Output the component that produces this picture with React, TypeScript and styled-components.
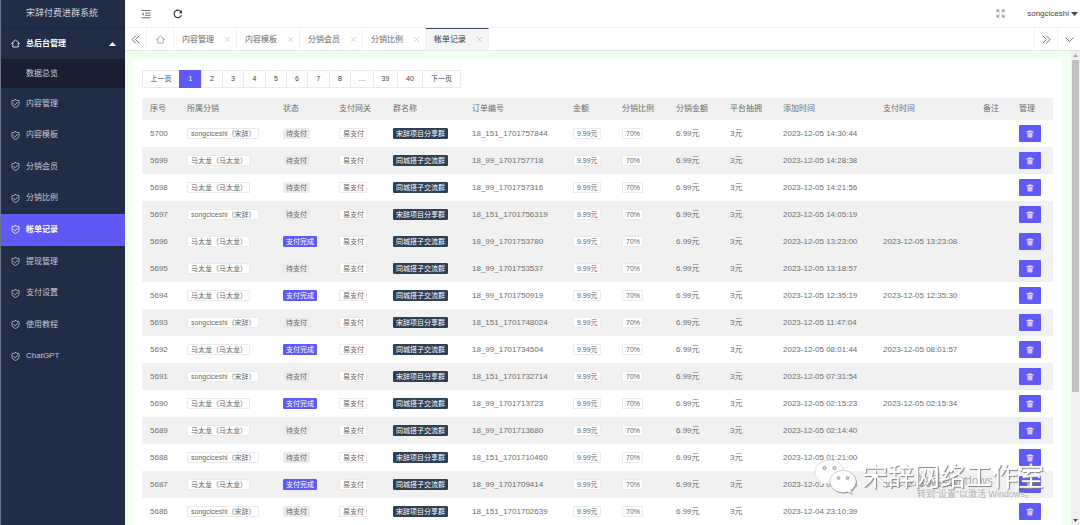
import React from 'react';
import styled, { createGlobalStyle, css } from 'styled-components';

const GlobalStyle = createGlobalStyle`
  *, *::before, *::after { box-sizing: border-box; }
  html, body, #root { height: 100%; }
  body {
    margin: 0;
    overflow: hidden;
    font-family: "Liberation Sans", "Noto Sans CJK SC", sans-serif;
    font-size: 8px;
    line-height: 12px;
    color: #6e6e6e;
    background: #f0fff0;
  }
  button { font: inherit; color: inherit; border: 0; padding: 0; background: none; cursor: pointer; }
  a { color: inherit; text-decoration: none; }
  ul { list-style: none; margin: 0; padding: 0; }
  svg { display: block; flex: none; }
`;

const Shell = styled.div`
  display: grid;
  grid-template-columns: 125px minmax(0, 1fr);
  grid-template-rows: minmax(0, 1fr);
  height: 100vh;
  overflow: hidden;
`;

/* Side navigation */

const Sidebar = styled.aside`
  display: flex;
  flex-direction: column;
  color: #c8cbd3;
  background: #212c47;
  border-left: 1px solid #6f7686;
`;

const Brand = styled.h1`
  margin: 0;
  height: 28px;
  padding-right: 2px;
  font-size: 9px;
  font-weight: 400;
  line-height: 27px;
  text-align: center;
  color: #d3d6dd;
  border-bottom: 1px solid #1d263c;
`;

const GroupButton = styled.button`
  display: flex;
  align-items: center;
  gap: 6px;
  width: 100%;
  height: 31px;
  padding: 0 9px 0 10px;
  font-weight: 700;
  color: #fff;
  text-align: left;
  span { flex: 1; }
`;

const SubItem = styled.a`
  display: block;
  height: 29px;
  padding-left: 25px;
  line-height: 29px;
  color: #d0d3da;
  background: #171f31;
`;

const Menu = styled.ul`
  display: grid;
  grid-template-rows: repeat(9, minmax(0, 1fr));
  height: 284px;
`;

const MenuLink = styled.a<{ $active?: boolean }>`
  display: flex;
  align-items: center;
  gap: 6px;
  height: 100%;
  padding-left: 10px;
  ${({ $active }) => $active && css`
    color: #fff;
    font-weight: 700;
    background: #5f59f6;
  `}
`;

/* Header */

const Main = styled.main`
  display: grid;
  grid-template-rows: 28px 23px minmax(0, 1fr);
  min-width: 0;
  min-height: 0;
`;

const TopBar = styled.header`
  display: flex;
  align-items: center;
  justify-content: space-between;
  padding: 0 2px 0 16px;
  background: #fff;
  border-bottom: 1px solid #f3f3f3;
`;

const ToolGroup = styled.div`
  display: flex;
  align-items: center;
  gap: 22px;
`;

const IconButton = styled.button`
  display: grid;
  place-items: center;
`;

const UserButton = styled.button`
  display: flex;
  align-items: center;
  gap: 2px;
  color: #444;
`;

const TabBar = styled.nav`
  display: flex;
  background: #fff;
  border-bottom: 1px solid #dfeadf;
  color: #666;
`;

const TabTool = styled.button<{ $left?: boolean }>`
  display: grid;
  place-items: center;
  width: ${({ $left }) => ($left ? 23 : 22)}px;
  color: #666;
  border-${({ $left }) => ($left ? 'left' : 'right')}: 1px solid #f3f3f3;
`;

const HomeTab = styled(TabTool)`
  width: 27px;
  color: #999;
`;

const Tab = styled.div<{ $active?: boolean }>`
  display: flex;
  align-items: center;
  justify-content: space-between;
  width: 63px;
  padding: 0 6px 0 8px;
  border-right: 1px solid #f3f3f3;
  border-top: 1px solid transparent;
  ${({ $active }) => $active && css`
    color: #333;
    background: #f5f5f5;
    border-top-color: #3b4567;
  `}
`;

const TabSpace = styled.div`
  flex: 1;
`;

/* Content */

const Viewport = styled.div`
  display: grid;
  grid-template-columns: minmax(0, 1fr) 9px;
  grid-template-rows: minmax(0, 1fr);
  min-height: 0;
`;

const Page = styled.div`
  padding: 8px 9px 0 8px;
  overflow: hidden;
`;

const Card = styled.section`
  padding: 11px 9px 20px;
  background: #fff;
`;

const Pagination = styled.nav`
  display: flex;
  width: max-content;
  border: 1px solid #ebebeb;
  border-radius: 1px;
  background: #fff;
`;

const PageButton = styled.button<{ $active?: boolean; $width: number }>`
  width: ${({ $width }) => $width}px;
  height: 16px;
  font-size: 7px;
  line-height: 16px;
  color: #444;
  & + & { border-left: 1px solid #ebebeb; }
  ${({ $active }) => $active && css`
    &&& {
      height: 18px;
      margin: -1px 0;
      color: #fff;
      background: #5f59f6;
      border-color: #5f59f6;
    }
  `}
`;

const Table = styled.table`
  width: 100%;
  margin-top: 10px;
  table-layout: fixed;
  border-collapse: collapse;
`;

const HeadCell = styled.th`
  height: 22px;
  padding: 0 0 0 8px;
  font-weight: 400;
  text-align: left;
  white-space: nowrap;
  background: #f1f1f1;
`;

const Row = styled.tr<{ $shaded: boolean }>`
  background: ${({ $shaded }) => ($shaded ? '#f1f1f1' : '#fff')};
`;

const Cell = styled.td`
  height: 27px;
  padding: 0 0 0 8px;
  white-space: nowrap;
`;

type Tone = 'outline' | 'grey' | 'primary' | 'dark';

const tones = {
  outline: css`padding-left: 3px; color: #666; background: #fff; border-color: #ebebeb;`,
  grey: css`background: #ececec; border-color: #ececec; color: #666;`,
  primary: css`background: #5f59f6; border-color: #5f59f6; color: #fff;`,
  dark: css`background: #2f4056; border-color: #2f4056; color: #fff;`,
};

const Tag = styled.span<{ $tone: Tone }>`
  display: block;
  width: max-content;
  height: 11px;
  padding: 0 2px;
  font-size: 7px;
  line-height: 9px;
  border: 1px solid;
  border-radius: 1px;
  ${({ $tone }) => tones[$tone]}
`;

const DeleteButton = styled.button`
  display: grid;
  place-items: center;
  width: 22px;
  height: 17px;
  color: #dcb8ff;
  background: #5f59f6;
  border-radius: 1px;
`;

const ScrollTrack = styled.div`
  display: flex;
  flex-direction: column;
  align-items: center;
  background: #f1f1f1;
`;

const ScrollArrow = styled.span<{ $down?: boolean }>`
  height: 9px;
  display: grid;
  place-items: center;
  color: ${({ $down }) => ($down ? '#505050' : '#a3a3a3')};
`;

const ScrollThumb = styled.div`
  width: 7px;
  height: 70%;
  margin-bottom: auto;
  background: #c1c1c1;
`;

/* Overlays */

const ActivationNote = styled.div`
  position: fixed;
  right: 50px;
  bottom: 25px;
  width: 113px;
  font-size: 9px;
  color: #b0b0b0;
  white-space: nowrap;
  pointer-events: none;
  strong { display: block; font-size: 12px; line-height: 14px; font-weight: 400; }
  span { display: block; }
`;

const Watermark = styled.div`
  position: fixed;
  right: 36px;
  bottom: 30px;
  display: flex;
  align-items: center;
  gap: 5px;
  font-size: 26px;
  line-height: 36px;
  color: #fff;
  white-space: nowrap;
  text-shadow: 1px 1px 1px #808080;
  pointer-events: none;
`;

const line = { fill: 'none', stroke: 'currentColor', strokeLinecap: 'round', strokeLinejoin: 'round' } as const;

const HomeIcon = ({ size = 9 }: { size?: number }) => (
  <svg width={size} height={size} viewBox="0 0 18 18" {...line} strokeWidth="1.6">
    <path d="M1 9 9 2l8 7M3.5 7.5V16h11V7.5" />
  </svg>
);

const ShieldIcon = () => (
  <svg width="9" height="9" viewBox="0 0 18 18" {...line} strokeWidth="1.6">
    <path d="M9 1.200c2.200 1.500 4.300 2 7 2V9c0 4-3 6.500-7 8-4-1.500-7-4-7-8V3.200c2.700 0 4.800-.5 7-2Z" />
    <path d="m5.500 9 2.700 2.600L13 6.800" />
  </svg>
);

const MenuFoldIcon = () => (
  <svg width="10" height="10" viewBox="0 0 20 20" {...line} strokeLinecap="butt" strokeWidth="2">
    <path d="M1 3h18M8 8h11M8 12.500h11M1 17.500h18" />
    <path d="M5.500 7v6.500L1.500 10.200Z" fill="currentColor" stroke="none" />
  </svg>
);

const RefreshIcon = () => (
  <svg width="10" height="10" viewBox="0 0 20 20" {...line} strokeWidth="2.200" stroke="#333">
    <path d="M16.500 13A7.500 7.500 0 1 1 15.500 5" />
    <path d="M18 2v6.500h-6.500Z" fill="#333" stroke="none" />
  </svg>
);

const ExpandIcon = () => (
  <svg width="9" height="9" viewBox="0 0 18 18" {...line} strokeWidth="1.500">
    <path d="M2 6V2h4M2 2l4.500 4.500M12 2h4v4M16 2l-4.500 4.500M2 12v4h4M2 16l4.500-4.500M12 16h4v-4M16 16l-4.500-4.500" />
  </svg>
);

const DoubleChevron = ({ flip = false }: { flip?: boolean }) => (
  <svg width="9" height="9" viewBox="0 0 18 18" {...line} strokeWidth="1.800">
    <path d={flip ? 'm2 2 7 7-7 7M9 2l7 7-7 7' : 'M9 2 2 9l7 7M16 2 9 9l7 7'} />
  </svg>
);

const ChevronDown = () => (
  <svg width="9" height="9" viewBox="0 0 18 18" {...line} strokeWidth="1.800">
    <path d="m1.500 5.500 7.500 7.500 7.500-7.500" />
  </svg>
);

const CloseIcon = () => (
  <svg width="5" height="5" viewBox="0 0 10 10" {...line} stroke="#bbb" strokeWidth="1.500">
    <path d="m1 1 8 8M9 1 1 9" />
  </svg>
);

const Triangle = ({ up = false, width = 7 }: { up?: boolean; width?: number }) => (
  <svg width={width} height={width > 5 ? 4 : 3} viewBox="0 0 8 4" preserveAspectRatio="none">
    <path d={up ? 'M0 4 4 0l4 4Z' : 'M0 0h8L4 4Z'} fill="currentColor" />
  </svg>
);

const TrashIcon = () => (
  <svg width="8" height="8" viewBox="0 0 16 16">
    <path d="M5 1h6v1.500h4V5H1V2.500h4Z" fill="#f3e8ff" />
    <path d="M2.500 6h11l-.8 9H3.300Z" fill="currentColor" />
    <path d="M6 7.500v6M10 7.500v6" stroke="#f3e8ff" strokeWidth=".8" />
  </svg>
);

const ChatLogo = () => (
  <svg width="43" height="36" viewBox="0 0 43 36">
    <path d="M15.500 1C7.500 1 1 6.300 1 13c0 3.700 2 7 5.200 9.200L5 26.500l5-2.600c1.700.5 3.500.8 5.500.8C23.500 24.700 30 19.500 30 13S23.500 1 15.500 1Z" fill="#fff" fillOpacity=".9" stroke="#d8d8d8" strokeWidth=".8" />
    <path d="M29.800 12.500c-7.200 0-13 4.900-13 11s5.800 11 13 11c1.600 0 3.200-.3 4.600-.7l4.300 2.100-1.100-3.500c3.200-2 5.200-5.200 5.200-8.900 0-6.100-5.800-11-13-11Z" fill="#8c8c8c" />
    <path d="M29 11.500c-7.200 0-13 4.900-13 11s5.800 11 13 11c1.600 0 3.200-.3 4.600-.7l4.300 2.300-1.100-3.700c3.200-2 5.200-5.200 5.200-8.900 0-6.100-5.800-11-13-11Z" fill="#fff" stroke="#b0b0b0" strokeWidth=".6" />
    <g fill="#dedede" stroke="#8a8a8a" strokeWidth=".8">
      <circle cx="10.500" cy="9" r="1.600" /><circle cx="20.500" cy="9" r="1.600" />
      <circle cx="24.500" cy="19" r="1.400" /><circle cx="33.500" cy="19" r="1.400" />
    </g>
  </svg>
);

const menu = ['内容管理', '内容模板', '分销会员', '分销比例', '帐单记录', '提现管理', '支付设置', '使用教程', 'ChatGPT'];
const tabs = ['内容管理', '内容模板', '分销会员', '分销比例', '帐单记录'];
const pages: [string, number][] = [
  ['上一页', 36], ['1', 22], ['2', 21], ['3', 21], ['4', 22], ['5', 21], ['6', 21],
  ['7', 22], ['8', 21], ['…', 23], ['39', 24], ['40', 25], ['下一页', 38],
];
const columns: [string, number][] = [
  ['序号', 37], ['所属分销', 96], ['状态', 56], ['支付网关', 54], ['群名称', 79], ['订单编号', 101], ['金额', 49],
  ['分销比例', 54], ['分销金额', 54], ['平台抽拥', 53], ['添加时间', 100], ['支付时间', 100], ['备注', 36], ['管理', 42],
];
const columnTotal = columns.reduce((sum, [, width]) => sum + width, 0);

type Order = { id: number; code: string; added: string; paid?: string };

const orders: Order[] = [
  { id: 5700, code: '18_151_1701757844', added: '2023-12-05 14:30:44' },
  { id: 5699, code: '18_99_1701757718', added: '2023-12-05 14:28:38' },
  { id: 5698, code: '18_99_1701757316', added: '2023-12-05 14:21:56' },
  { id: 5697, code: '18_151_1701756319', added: '2023-12-05 14:05:19' },
  { id: 5696, code: '18_99_1701753780', added: '2023-12-05 13:23:00', paid: '2023-12-05 13:23:08' },
  { id: 5695, code: '18_99_1701753537', added: '2023-12-05 13:18:57' },
  { id: 5694, code: '18_99_1701750919', added: '2023-12-05 12:35:19', paid: '2023-12-05 12:35:30' },
  { id: 5693, code: '18_151_1701748024', added: '2023-12-05 11:47:04' },
  { id: 5692, code: '18_99_1701734504', added: '2023-12-05 08:01:44', paid: '2023-12-05 08:01:57' },
  { id: 5691, code: '18_151_1701732714', added: '2023-12-05 07:31:54' },
  { id: 5690, code: '18_99_1701713723', added: '2023-12-05 02:15:23', paid: '2023-12-05 02:15:34' },
  { id: 5689, code: '18_99_1701713680', added: '2023-12-05 02:14:40' },
  { id: 5688, code: '18_151_1701710460', added: '2023-12-05 01:21:00' },
  { id: 5687, code: '18_99_1701709414', added: '2023-12-05 01:03:34', paid: '2023-12-05 01:03:48' },
  { id: 5686, code: '18_151_1701702639', added: '2023-12-04 23:10:39' },
];
const hoveredOrder = 5696;

const OrderRow = ({ order }: { order: Order }) => {
  const own = order.code.startsWith('18_151');
  return (
    <Row $shaded={order.id % 2 === 1 || order.id === hoveredOrder}>
      <Cell>{order.id}</Cell>
      <Cell><Tag $tone="outline">{own ? 'songciceshi（宋辞）' : '马太龙（马太龙）'}</Tag></Cell>
      <Cell><Tag $tone={order.paid ? 'primary' : 'grey'}>{order.paid ? '支付完成' : '待支付'}</Tag></Cell>
      <Cell><Tag $tone="outline">易支付</Tag></Cell>
      <Cell><Tag $tone="dark">{own ? '宋辞项目分享群' : '同城搭子交流群'}</Tag></Cell>
      <Cell>{order.code}</Cell>
      <Cell><Tag $tone="outline">9.99元</Tag></Cell>
      <Cell><Tag $tone="outline">70%</Tag></Cell>
      <Cell>6.99元</Cell>
      <Cell>3元</Cell>
      <Cell>{order.added}</Cell>
      <Cell>{order.paid}</Cell>
      <Cell />
      <Cell><DeleteButton aria-label={`删除 ${order.id}`}><TrashIcon /></DeleteButton></Cell>
    </Row>
  );
};

export default function App() {
  return (
    <>
      <GlobalStyle />
      <Shell>
        <Sidebar>
          <Brand>宋辞付费进群系统</Brand>
          <GroupButton><HomeIcon /><span>总后台管理</span><Triangle up /></GroupButton>
          <SubItem href="#overview">数据总览</SubItem>
          <Menu>
            {menu.map((label) => (
              <li key={label}>
                <MenuLink href={`#${label}`} $active={label === '帐单记录'}><ShieldIcon />{label}</MenuLink>
              </li>
            ))}
          </Menu>
        </Sidebar>
        <Main>
          <TopBar>
            <ToolGroup>
              <IconButton aria-label="收起菜单"><MenuFoldIcon /></IconButton>
              <IconButton aria-label="刷新"><RefreshIcon /></IconButton>
            </ToolGroup>
            <ToolGroup>
              <IconButton aria-label="全屏"><ExpandIcon /></IconButton>
              <UserButton>songciceshi<Triangle /></UserButton>
            </ToolGroup>
          </TopBar>
          <TabBar>
            <TabTool aria-label="向左"><DoubleChevron /></TabTool>
            <HomeTab aria-label="首页"><HomeIcon /></HomeTab>
            {tabs.map((label) => (
              <Tab key={label} $active={label === '帐单记录'}>
                <a href={`#tab-${label}`}>{label}</a>
                <IconButton aria-label={`关闭${label}`}><CloseIcon /></IconButton>
              </Tab>
            ))}
            <TabSpace />
            <TabTool $left aria-label="向右"><DoubleChevron flip /></TabTool>
            <TabTool $left aria-label="更多"><ChevronDown /></TabTool>
          </TabBar>
          <Viewport>
            <Page>
              <Card>
                <Pagination>
                  {pages.map(([label, width]) => (
                    <PageButton key={label} $width={width} $active={label === '1'}>{label}</PageButton>
                  ))}
                </Pagination>
                <Table>
                  <colgroup>
                    {columns.map(([label, width]) => (
                      <col key={label} style={{ width: `${(width / columnTotal) * 100}%` }} />
                    ))}
                  </colgroup>
                  <thead>
                    <tr>{columns.map(([label]) => <HeadCell key={label} scope="col">{label}</HeadCell>)}</tr>
                  </thead>
                  <tbody>{orders.map((order) => <OrderRow key={order.id} order={order} />)}</tbody>
                </Table>
              </Card>
            </Page>
            <ScrollTrack>
              <ScrollArrow><Triangle up width={5} /></ScrollArrow>
              <ScrollThumb />
              <ScrollArrow $down><Triangle width={5} /></ScrollArrow>
            </ScrollTrack>
          </Viewport>
        </Main>
      </Shell>
      <ActivationNote>
        <strong>激活 Windows</strong>
        <span>转到“设置”以激活 Windows。</span>
      </ActivationNote>
      <Watermark><ChatLogo />宋辞网络工作室</Watermark>
    </>
  );
}
